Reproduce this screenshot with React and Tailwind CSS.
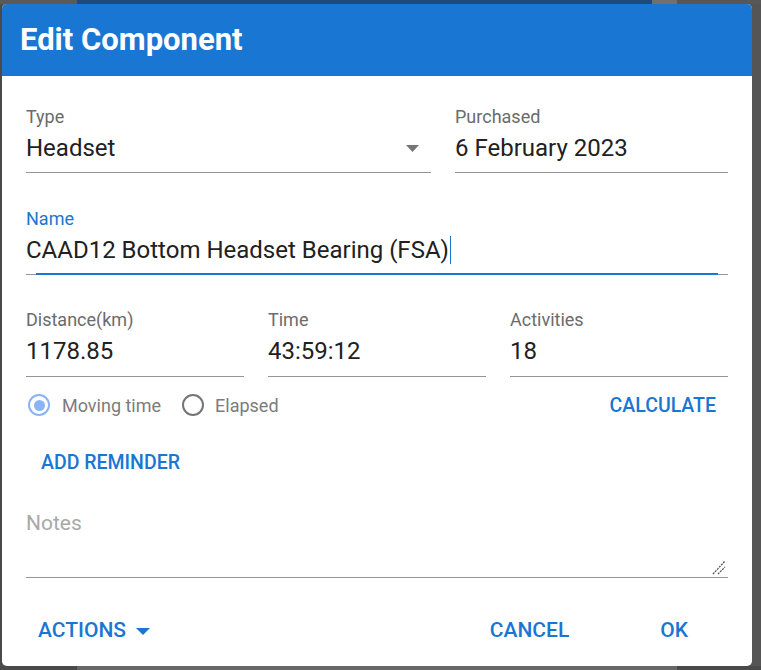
import React from "react";

function Label({ children, color = "text-[#6b6b6b]" }) {
  return (
    <div className={`h-[24px] text-[18px] leading-[24px] ${color} whitespace-nowrap`}>{children}</div>
  );
}

function Value({ children, pb = "pb-[8px]" }) {
  return (
    <div className={`mt-[3px] ${pb} border-b border-[#949494]`}>
      <div className="h-[32px] text-[24px] leading-[32px] text-[#212121] whitespace-nowrap flex items-center">
        {children}
      </div>
    </div>
  );
}

export default function App() {
  return (
    <div className="w-[761px] h-[670px] overflow-hidden flex flex-col bg-[#565656] font-['Roboto',sans-serif]">
      {/* top backdrop strip */}
      <div className="flex h-[4px] shrink-0">
        <div className="w-[77px] bg-[#5a5a5a]" />
        <div className="w-[575px] bg-[#1c4a7a]" />
        <div className="w-[25px] bg-[#707070]" />
        <div className="flex-1 bg-[#575757]" />
      </div>

      <div className="flex h-[662px] shrink-0">
        <div className="w-[2px] bg-[#4a4a4a]" />
        {/* dialog */}
        <div className="w-[750px] h-full bg-white rounded-[5px] overflow-hidden flex flex-col">
          <div className="h-[72px] shrink-0 bg-[#1976d2] flex items-center pl-[18px] text-white text-[31px] font-bold">
            Edit Component
          </div>

          <div className="flex-1 px-[24px] pt-[29px] flex flex-col">
            {/* row 1 */}
            <div className="grid grid-cols-[405px_1fr] gap-x-[24px]">
              <div>
                <Label>Type</Label>
                <Value>
                  <span className="flex-1">Headset</span>
                  <svg width="13" height="7" viewBox="0 0 13 7" className="mr-[12px]">
                    <polygon points="0,0 13,0 6.5,7" fill="#757575" />
                  </svg>
                </Value>
              </div>
              <div>
                <Label>Purchased</Label>
                <Value>6 February 2023</Value>
              </div>
            </div>

            {/* row 2 name */}
            <div className="mt-[34px]">
              <Label color="text-[#1976d2]">Name</Label>
              <div className="mt-[3px] pb-[7px]">
                <div className="h-[32px] text-[24px] leading-[32px] text-[#212121] whitespace-nowrap flex items-center">
                  <span>CAAD12 Bottom Headset Bearing (FSA)</span>
                  <span className="inline-block w-[1.5px] h-[28px] bg-[#1976d2] ml-[1px]" />
                </div>
              </div>
              <div className="relative h-[2px]">
                <div className="absolute inset-x-0 top-[1px] h-px bg-[#949494]" />
                <div className="absolute left-[10px] right-[10px] top-0 h-[2px] bg-[#1976d2]" />
              </div>
            </div>

            {/* row 3 */}
            <div className="mt-[33px] grid grid-cols-3 gap-x-[24px]">
              <div>
                <Label>Distance(km)</Label>
                <Value pb="pb-[9px]">1178.85</Value>
              </div>
              <div>
                <Label>Time</Label>
                <Value pb="pb-[9px]">43:59:12</Value>
              </div>
              <div>
                <Label>Activities</Label>
                <Value pb="pb-[9px]">18</Value>
              </div>
            </div>

            {/* radio row */}
            <div className="mt-[7px] h-[42px] flex items-center justify-between">
              <div className="flex items-center pl-[2px]">
                <div className="w-[22px] h-[22px] rounded-full border-[2px] border-[#8ab4f8] flex items-center justify-center">
                  <div className="w-[11px] h-[11px] rounded-full bg-[#8ab4f8]" />
                </div>
                <span className="ml-[12px] text-[18px] text-[#7c7c7c]">Moving time</span>
                <div className="ml-[21px] w-[22px] h-[22px] rounded-full border-[2px] border-[#757575]" />
                <span className="ml-[11px] text-[18px] text-[#7c7c7c]">Elapsed</span>
              </div>
              <span className="mr-[12px] mt-[2px] text-[19.5px] font-medium text-[#1976d2]">CALCULATE</span>
            </div>

            {/* add reminder */}
            <div className="mt-[15px] h-[42px] flex items-center pl-[15px]">
              <span className="mt-[2px] text-[19.5px] font-medium text-[#1976d2]">ADD REMINDER</span>
            </div>

            {/* notes */}
            <div className="mt-[26px] relative h-[69px] border-b border-[#949494]">
              <div className="text-[21px] leading-[28px] text-[#a8a8a8]">Notes</div>
              <svg width="14" height="15" viewBox="0 0 14 15" className="absolute right-[2px] bottom-[2px]">
                <line x1="1" y1="14" x2="13" y2="1" stroke="#555" strokeWidth="1.3" strokeDasharray="2 1" />
                <line x1="6" y1="14" x2="13" y2="7" stroke="#555" strokeWidth="1.3" strokeDasharray="2 1" />
              </svg>
            </div>

            {/* actions */}
            <div className="mt-[32px] h-[42px] flex items-center">
              <div className="flex items-center pl-[12px]">
                <span className="text-[21px] font-medium text-[#1976d2]">ACTIONS</span>
                <svg width="14" height="7" viewBox="0 0 14 7" className="ml-[10px]">
                  <polygon points="0,0 14,0 7,7" fill="#1976d2" />
                </svg>
              </div>
              <span className="ml-auto text-[21px] font-medium text-[#1976d2]">CANCEL</span>
              <span className="ml-[91px] mr-[40px] text-[21px] font-medium text-[#1976d2]">OK</span>
            </div>
          </div>
        </div>
        <div className="flex-1 bg-[#555555]" />
      </div>

      {/* bottom strip */}
      <div className="flex h-[4px] shrink-0">
        <div className="w-[77px] bg-[#4a4a4a]" />
        <div className="w-[600px] bg-[#676767]" />
        <div className="flex-1 bg-[#4a4a4a]" />
      </div>
    </div>
  );
}
